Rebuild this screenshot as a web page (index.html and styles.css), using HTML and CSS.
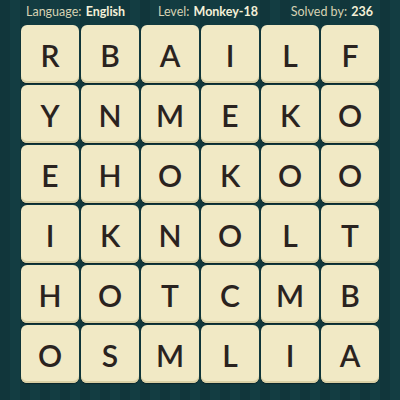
FILE: index.html
```html
<!DOCTYPE html>
<html>
<head>
<meta charset="utf-8">
<link rel="stylesheet" href="styles.css">
</head>
<body>
<div class="page">
  <div class="header">
    <span class="info">Language: <b>English</b></span>
    <span class="info">Level: <b>Monkey-18</b></span>
    <span class="info">Solved by: <b>236</b></span>
  </div>
  <div class="board">
    <div class="tile">R</div><div class="tile">B</div><div class="tile">A</div><div class="tile">I</div><div class="tile">L</div><div class="tile">F</div>
    <div class="tile">Y</div><div class="tile">N</div><div class="tile">M</div><div class="tile">E</div><div class="tile">K</div><div class="tile">O</div>
    <div class="tile">E</div><div class="tile">H</div><div class="tile">O</div><div class="tile">K</div><div class="tile">O</div><div class="tile">O</div>
    <div class="tile">I</div><div class="tile">K</div><div class="tile">N</div><div class="tile">O</div><div class="tile">L</div><div class="tile">T</div>
    <div class="tile">H</div><div class="tile">O</div><div class="tile">T</div><div class="tile">C</div><div class="tile">M</div><div class="tile">B</div>
    <div class="tile">O</div><div class="tile">S</div><div class="tile">M</div><div class="tile">L</div><div class="tile">I</div><div class="tile">A</div>
  </div>
</div>
</body>
</html>
```
FILE: styles.css
```css
html, body {
  margin: 0;
  padding: 0;
}
body {
  width: 400px;
  height: 400px;
  overflow: hidden;
  background-color: #123a3f;
  background-image: repeating-linear-gradient(90deg, #11363b 0px, #11363b 10px, #133d42 10px, #133d42 20px);
  font-family: Lato, "Liberation Sans", sans-serif;
}
.page {
  display: flex;
  flex-direction: column;
}
.header {
  height: 25px;
  display: flex;
  justify-content: space-between;
  align-items: center;
  padding: 0 27px 2px 26px;
  box-sizing: border-box;
  font-size: 12.5px;
  color: #d6d2b3;
}
.info b {
  font-weight: 700;
  color: #f4f0d8;
  margin-left: 1px;
}
.board {
  margin-left: 21px;
  display: grid;
  grid-template-columns: repeat(6, 58px);
  grid-auto-rows: 58px;
  gap: 2px;
}
.tile {
  background: #f1e9c5;
  border-radius: 6px;
  box-shadow: inset 0 -2px 0 #d9cfa4, 0 1px 1px rgba(0,0,0,0.35);
  display: flex;
  align-items: center;
  justify-content: center;
  font-size: 30px;
  font-weight: 600;
  color: #2a231f;
  padding-top: 1px;
  box-sizing: border-box;
}
```
